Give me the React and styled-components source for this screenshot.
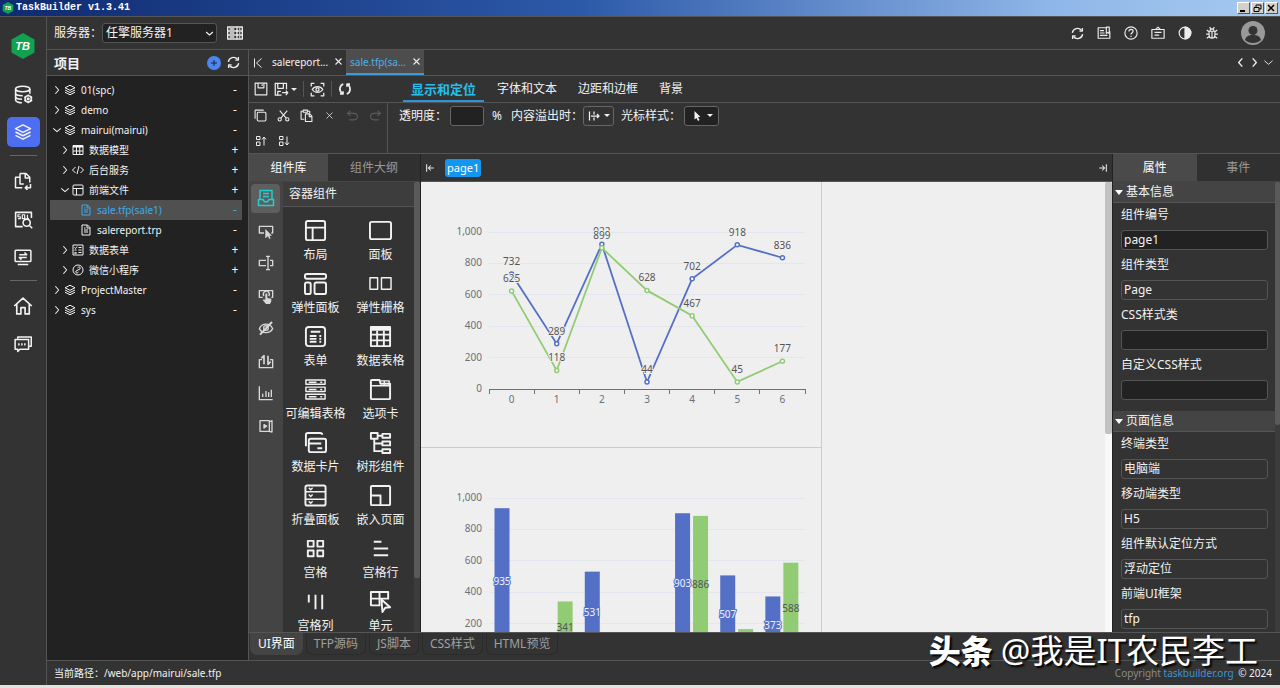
import React, { useState } from 'react';
import styled, { createGlobalStyle } from 'styled-components';

const GlobalStyle = createGlobalStyle`
    * { box-sizing: border-box; }
    html, body, #root { height: 100%; }
    body {
        margin: 0;
        overflow: hidden;
        background-color: #333;
        color: #f2f2f2;
        font-family: 'Noto Sans', 'Noto Sans CJK SC', sans-serif;
        font-size: 12px;
        line-height: 16px;
    }
    button, input, select { font: inherit; color: inherit; margin: 0; }
    button { background: none; border: 0; padding: 0; cursor: pointer; }
    a { text-decoration: none; }
`;

/* ---------- icons, all on a 24 grid ---------- */

const cursor = <path d="M11 9l10 10-4 0 2 4-2 1-2-4-4 3z" fill="currentColor" stroke="none" />;

const ICONS = {
    layers: <><path d="M12 2.500L22 7.500 12 12.500 2 7.500z" /><path d="M2 12l10 5 10-5" /><path d="M2 16.500l10 5 10-5" /></>,
    table: <><path d="M2 3h20v18H2z" /><path d="M2 5h20" strokeWidth="4" /><path d="M2 14h20M9 5v16M15.500 5v16" /></>,
    code: <path d="M7 6l-6 6 6 6M17 6l6 6-6 6M14 4l-4 16" />,
    layout: <><rect x="2" y="2" width="20" height="20" rx="2" /><path d="M2 9h20M9 9v13" /></>,
    file: <><path d="M4 2h11l5 5v15H4z" /><path d="M14 2v6h6M8 12h8M8 16h8M8 8h3" /></>,
    form: <><rect x="2" y="2" width="20" height="20" /><path d="M5 7l2 2 3-4M5 16l4 4M9 16l-4 4M13 7h6M13 12h6M13 17h6M5 12h4" /></>,
    mini: <><circle cx="12" cy="12" r="10" /><path d="M11 8c3-4 7-1 5 2-1 1-3 1-4 2s-3 1-4 2c-2 3 2 6 5 2" /></>,
    right: <path d="M8 3l8 9-8 9" />,
    down: <path d="M3 8l9 8 9-8" />,
    left: <path d="M16 3l-8 9 8 9" />,
    first: <path d="M5 3v18M19 3l-10 9 10 9" />,
    sync: <><path d="M2.500 11a9.500 9.500 0 0 1 17-4.500M21.500 13a9.500 9.500 0 0 1-17 4.500" /><path d="M21 2v5.500h-5.500M3 22v-5.500h5.500" /></>,
    ring: <><path d="M9 3.500a9 9 0 0 0-1.500 16M15 20.500a9 9 0 0 0 1.500-16" /><path d="M3.500 20.500h5v-4.500M20.500 3.500h-5v4.500" /></>,
    server: <><path d="M1 3h22v18H1zM1 9h22M1 15h22M15 3v18" /><path d="M4 6h7M4 12h7M4 18h7M18 6h2M18 12h2M18 18h2" /></>,
    dbgear: <><ellipse cx="11" cy="5" rx="9" ry="3.500" /><path d="M2 5v14c0 2 4 3.500 8 3.500M20 5v6M2 10c0 2 4 3.500 9 3.500M2 14.500c0 2 3 3.500 8 3.500" /><circle cx="18" cy="17.500" r="4" /><circle cx="18" cy="17.500" r="1" /><path d="M18 12v2M18 21v2M13 15l2 1M21 19l2 1M23 15l-2 1M15 19l-2 1" /></>,
    docs: <><path d="M8 7H2v14h9" /><path d="M8 2h8l5 5v7M8 2v14h5M15 2v6h6" /><path d="M22 16v5h-7M18 18l-3 3 3 3" /></>,
    sql: <><path d="M22 10V3H2v18h9" /><path d="M8 6H5v2.500h3V11H5M10.500 6h3v5h-3zM13 10l2 2M17 6v5h2" strokeWidth="1.500" /><circle cx="16" cy="16" r="4.500" /><path d="M19.500 19.500L23 23" /></>,
    screen: <><rect x="1.500" y="3" width="21" height="15" rx="1" /><path d="M5 22h14M7 9h10l-3-3M17 12.500H7l3 3" /></>,
    home: <path d="M1.500 12L12 2.500 22.500 12M4.500 10v11.500h5V14h5v7.500h5V10" />,
    chat: <><path d="M5 5V2.500h18V15h-3" /><path d="M1.500 6h18v13H8l-3 3v-3H1.500z" /><path d="M5.500 12.500h2M9.500 12.500h2M13.500 12.500h2" strokeWidth="3" /></>,
    note: <><path d="M17 3H2v18h20V9" /><path d="M5 8h7M5 12h8M5 16h13M16 2v11l2.500-2 2.500 2V2z" /></>,
    help: <><circle cx="12" cy="12" r="10.500" /><path d="M8.500 9.500c0-5 7-4.500 7-.5 0 2.500-3.500 2.500-3.500 5.500M12 16.500v2.500" /></>,
    board: <><rect x="1.500" y="6" width="21" height="15" /><path d="M8 6l4-4 4 4M6 11h12M6 15.500h8" /></>,
    contrast: <><circle cx="12" cy="12" r="10" /><path d="M12 2a10 10 0 0 1 0 20z" fill="currentColor" /></>,
    bug: <><path d="M7 9h10v7a5 5 0 0 1-10 0zM8.500 9a3.500 4 0 0 1 7 0M12 9v12M7 10L3 7M17 10l4-3M7 14H2M17 14h5M7 18l-4 3M17 18l4 3M8 2l2 3M16 2l-2 3" /></>,
    save: <><path d="M2 2h20v20H2z" /><path d="M7 2v8h10V2M14 4v3" /></>,
    saveas: <><path d="M12 21H2V2h18v10" /><path d="M6 2v8h9V2M13 17h9l-3-3M22 17l-3 4M6 21v-6h5" /></>,
    preview: <><path d="M2 7V2h5M17 2h5v5M22 17v5h-5M7 22H2v-5" /><path d="M3.500 12c4-6 13-6 17 0-4 6-13 6-17 0z" /><circle cx="12" cy="12" r="2.500" /></>,
    copy: <><rect x="6" y="6" width="16" height="16" rx="2" /><path d="M2 18V3q0-1 1-1h15" /></>,
    cut: <><circle cx="5" cy="19" r="3" /><circle cx="19" cy="19" r="3" /><path d="M7 17L19 3M17 17L5 3" /></>,
    paste: <><path d="M8 19H2V4h4M14 4h4v4M6 2h8v4H6z" /><path d="M10 9h8l4 4v10H10zM17 9v5h5" /></>,
    close: <path d="M4 4l16 16M20 4L4 20" />,
    undo: <path d="M8 3L3 8l5 5M3 8h12a6 6 0 0 1 0 12H6" />,
    redo: <path d="M16 3l5 5-5 5M21 8H9a6 6 0 0 0 0 12h9" />,
    moveup: <path d="M3 3h7v6H3zM3 14h7v7H3zM18 21V4M14 9l4-5 4 5" />,
    movedown: <path d="M3 3h7v6H3zM3 14h7v7H3zM18 3v17M14 15l4 5 4-5" />,
    collapse: <path d="M4 3v18M21 12H8M14 6l-6 6 6 6" />,
    expand: <path d="M20 3v18M3 12h13M10 6l6 6-6 6" />,
    overflow: <path d="M3 3v18M12 3v6M12 15v6M6 12h16M18 8l4 4-4 4" />,
    pointer: <path d="M7 2l12 12-5 0 3 6-3 2-3-6-4 3z" fill="currentColor" stroke="none" />,
    plus: <path d="M12 3v18M3 12h18" />,
    // component groups
    box: <><path d="M4 14V2h16v12" /><path d="M8 6h8M8 10h8M2 14h6l2 3h4l2-3h6v8H2z" /></>,
    click: <><path d="M9 15H2V5h20v10h-2" />{cursor}</>,
    textbox: <><path d="M12 8H2v8h10M18 8h4v8h-4" /><path d="M12 2h6M15 2v20M12 22h6" /></>,
    tap: <><path d="M7 14H2V4h20v10h-2" /><path d="M9 12a4.500 4.500 0 1 1 7 0" /><path d="M11 9q1.500-2 3 0v6l6 1v4l-2 4h-6l-5-6 2-1 2 1z" fill="currentColor" stroke="none" /></>,
    hidden: <><path d="M2 13c4-9 16-9 20 0-4 8-16 8-20 0z" /><circle cx="12" cy="12" r="3.500" /><path d="M3 22L21 3" strokeWidth="3" /></>,
    transfer: <><path d="M6 10H2v12h20V10h-4" /><path d="M9 17V4L5 8M15 4v13l4-4" strokeWidth="2.500" /></>,
    chart: <><path d="M2 2v20h20" /><path d="M7 18v-5M12 18V9M16 18v-7M20 18V7" /></>,
    media: <><path d="M3 4h14v16H3zM17 6l4-2v17l-4-1" /><path d="M9 10l4 2-4 3z" fill="currentColor" /></>,
    // components
    panel: <rect x="1" y="3" width="22" height="18" rx="2" />,
    flex: <><rect x="1" y="2" width="22" height="5" rx="2" /><rect x="1" y="11" width="6" height="12" rx="2" /><rect x="11" y="11" width="12" height="12" rx="2" /></>,
    flexgrid: <path d="M1 6h8v12H1zM13 6h10v12H13z" strokeWidth="1.500" />,
    formbox: <><rect x="2" y="2" width="20" height="20" rx="3" /><path d="M7 7h10M6 11.500h7M6 14.500h7M6 17.500h7M16 11.500h2M16 14.500h2M16 17.500h2" /></>,
    grid: <><path d="M2 2h20v20H2zM2 10h20M2 16h20M8.500 6v16M15.500 6v16" /><path d="M2 4h20" strokeWidth="4" /></>,
    editrows: <><path d="M2 2h20v4.500H2zM2 9.500h20V14H2zM2 17h20v5H2z" strokeWidth="1.500" /><path d="M5 4.500h8M17 4.500h2M5 12h8M17 12h2M5 19.500h8M17 19.500h2" strokeWidth="1.500" /></>,
    tabs: <><path d="M2 22V3q0-1 1-1h8l1 4h10v15q0 1-1 1H3q-1 0-1-1" /><path d="M2 8h20M12 3h9v4M16 3v4" strokeWidth="1.500" /></>,
    cards: <><path d="M2 16V4q0-2 2-2h13q2 0 2 2" /><rect x="5" y="8" width="18" height="14" rx="2" /><path d="M5 13h13M14 18h5" /></>,
    tree: <><path d="M2 2h7v6H2zM14 3h8v4h-8zM14 11h8v4h-8zM14 19h8v4h-8z" /><path d="M5.500 8v13H14M5.500 13H14M9 5h5" /></>,
    accordion: <><rect x="1.500" y="1.500" width="21" height="21" rx="2" /><path d="M1.500 8h21M1.500 16h21M5 4l2 2 2-2M5 11l2 2 2-2M5 18l2 2 2-2" strokeWidth="1.500" /></>,
    embed: <><rect x="2" y="2" width="20" height="20" rx="1" /><path d="M2 12h10v10" /></>,
    cells: <path d="M4 4h6v6H4zM14 4h6v6h-6zM4 14h6v6H4zM14 14h6v6h-6z" />,
    rows: <path d="M5 5h8M5 12h15M5 19h15" />,
    cols: <path d="M5 5v8M12 5v15M19 5v15" />,
    cell: <><path d="M12 16H2V2h18v8M2 9h18M11 2v14" /><path d="M13 10l9 8-5 .5-3 4.500z" /></>,
};

const Svg = styled.svg`
    display: block;
    flex: none;
    fill: none;
    stroke: currentColor;
    stroke-linejoin: round;
`;

const Icon = ({ name, size = 14, stroke = 2 }) => (
    <Svg width={size} height={size} viewBox="0 0 24 24" strokeWidth={stroke} aria-hidden="true">{ICONS[name]}</Svg>
);

const Caret = styled.span`
    border: 3px solid transparent;
    border-top-color: currentColor;
    border-bottom: 0;
`;

/* ---------- window frame ---------- */

const Window = styled.div`
    display: flex;
    flex-direction: column;
    height: 100%;
    position: relative;
    border-bottom: 3px solid #e4e2dc;
`;

const TitleBar = styled.header`
    display: flex;
    align-items: center;
    gap: 2px;
    height: 16px;
    padding: 0 2px;
    background: linear-gradient(90deg, #0f2a70, #2c59a8 45%, #8fb6e8 82%, #a6caf0);
    font: bold 10px/16px 'Liberation Mono', monospace;
    color: white;
`;

const WindowTitle = styled.span`
    flex: 1;
`;

const WindowButtons = styled.div`
    display: flex;
    gap: 1px;
`;

const WindowButton = styled.button`
    display: grid;
    place-items: center;
    width: 13px;
    height: 12px;
    background-color: #d4d0c8;
    border: 1px solid;
    border-color: #fff #555 #555 #fff;
    color: black;
`;

const Main = styled.div`
    display: flex;
    flex: 1;
    min-height: 0;
    border-top: 1px solid #555;
`;

const Rail = styled.nav`
    display: flex;
    flex-direction: column;
    align-items: center;
    gap: 8px;
    width: 47px;
    padding-top: 16px;
    border-right: 1px solid #555;
`;

const Logo = styled.a`
    display: block;
    height: 26px;
    margin-bottom: 12px;
`;

const RailButton = styled.button`
    display: grid;
    place-items: center;
    width: 33px;
    height: 30px;
    border-radius: 5px;
    background-color: ${({ $active }) => ($active ? '#4e6ef2' : 'transparent')};
`;

const RailLine = styled.hr`
    width: 27px;
    margin: 0 0 2px;
    border: 0;
    border-top: 1px solid #666;
`;

const Workspace = styled.div`
    display: flex;
    flex-direction: column;
    flex: 1;
    min-width: 0;
`;

const TopBar = styled.div`
    display: flex;
    align-items: center;
    height: 33px;
    padding: 0 15px 0 7px;
    border-bottom: 1px solid #555;
`;

const ServerBox = styled.div`
    position: relative;
    display: flex;
    align-items: center;
    margin-right: 10px;
    svg { position: absolute; right: 3px; pointer-events: none; }
`;

const ServerSelect = styled.select`
    appearance: none;
    width: 115px;
    height: 20px;
    padding: 0 3px;
    border: 1px solid #555;
    border-radius: 3px;
    background-color: #222;
    line-height: 18px;
`;

const TopActions = styled.div`
    display: flex;
    align-items: center;
    gap: 13px;
    margin-left: auto;
`;

const IconButton = styled.button`
    display: flex;
    align-items: center;
    justify-content: center;
    gap: 2px;
    color: ${({ $dim }) => ($dim ? '#5c5c5c' : '#ececec')};
`;

const Avatar = styled(IconButton)`
    margin-left: 9px;
`;

const Panes = styled.div`
    display: flex;
    flex: 1;
    min-height: 0;
`;

const StatusBar = styled.footer`
    display: flex;
    align-items: center;
    justify-content: space-between;
    height: 25px;
    padding: 0 8px 0 7px;
    border-top: 1px solid #555;
    font-size: 10px;
    a { margin-right: 2px; color: #3d94d6; }
`;

const Faint = styled.span`
    color: #8a8a8a;
`;

const Watermark = styled.div`
    position: absolute;
    right: 22px;
    bottom: 14px;
    font-size: 33px;
    line-height: 40px;
    color: white;
    text-shadow: 2px 2px 2px #000;
    pointer-events: none;
    b { margin-right: 8px; font-size: 32px; font-weight: 900; }
`;

/* ---------- project tree ---------- */

const ProjectPane = styled.aside`
    display: flex;
    flex-direction: column;
    width: 201px;
    background-color: #222;
`;

const ProjectHead = styled.div`
    display: flex;
    align-items: center;
    gap: 6px;
    height: 26px;
    padding: 0 8px 0 7px;
    border-bottom: 1px solid #555;
    background-color: #333;
    h2 { flex: 1; margin: 0; font-size: 13px; }
`;

const AddButton = styled.button`
    display: grid;
    place-items: center;
    width: 14px;
    height: 14px;
    border-radius: 50%;
    background-color: #4e86f0;
    color: #16264a;
`;

const Tree = styled.ul`
    list-style: none;
    margin: 0;
    padding: 4px 6px 0 3px;
    font-size: 10px;
`;

const TreeRow = styled.li`
    display: flex;
    align-items: center;
    height: 20px;
    padding: 0 3px 0 ${({ $depth }) => $depth * 8}px;
    background-color: ${({ $active }) => ($active ? '#505050' : 'transparent')};
    color: ${({ $active }) => ($active ? '#3fa9e8' : '#f2f2f2')};
`;

const TreeToggle = styled.button`
    display: grid;
    place-items: center;
    width: 14px;
    height: 20px;
`;

const TreeName = styled.span`
    flex: 1;
    padding-left: 5px;
    white-space: nowrap;
`;

const TreeAction = styled.button`
    width: 8px;
    font-size: 12px;
    text-align: center;
`;

/* ---------- editor ---------- */

const Editor = styled.main`
    display: flex;
    flex-direction: column;
    flex: 1;
    min-width: 0;
    border-left: 1px solid #555;
`;

const FileTabs = styled.div`
    display: flex;
    align-items: center;
    height: 26px;
    padding: 0 6px 0 3px;
    border-bottom: 1px solid #555;
    font-size: 10px;
`;

const FileTab = styled.div`
    display: flex;
    align-items: center;
    justify-content: space-between;
    width: 78px;
    height: 25px;
    padding: 0 3px 0 4px;
    border-bottom: 2px solid ${({ $active }) => ($active ? '#3c9ad8' : 'transparent')};
    background-color: ${({ $active }) => ($active ? '#4d4d4d' : 'transparent')};
    span { color: ${({ $active }) => ($active ? '#4fb0e8' : '#f2f2f2')}; }
    &:nth-child(2) { margin-left: 4px; }
`;

const TabArrows = styled.div`
    display: flex;
    gap: 3px;
    margin-left: auto;
`;

const ToolRow = styled.div`
    display: flex;
    min-height: 27px;
    border-bottom: 1px solid #555;
`;

const FileTools = styled.div`
    display: flex;
    align-items: center;
    gap: 6px;
    width: 149px;
    padding-left: 5px;
`;

const ToolLine = styled.span`
    width: 1px;
    height: 16px;
    background-color: #555;
`;

const StyleTabs = styled.div`
    display: flex;
    align-items: stretch;
    gap: 5px;
    padding-left: 5px;
`;

const StyleTab = styled.button`
    padding: 2px 8px 0;
    border-bottom: 2px solid ${({ $active }) => ($active ? '#2b93d8' : 'transparent')};
    color: ${({ $active }) => ($active ? '#22c0ea' : '#f2f2f2')};
    font-size: ${({ $active }) => ($active ? 13 : 12)}px;
    font-weight: ${({ $active }) => ($active ? 'bold' : 'normal')};
`;

const EditTools = styled.div`
    display: grid;
    grid-template-columns: repeat(6, 23px);
    grid-auto-rows: 25px;
    width: 139px;
    border-right: 1px solid #555;
`;

const StyleFields = styled.div`
    display: flex;
    align-items: center;
    height: 25px;
    padding-left: 11px;
`;

const OpacityInput = styled.input`
    width: 34px;
    height: 20px;
    margin: 0 8px 0 3px;
    border: 1px solid #666;
    border-radius: 3px;
    background-color: #222;
`;

const Unit = styled.span`
    width: 19px;
`;

const DropButton = styled.button`
    display: flex;
    align-items: center;
    justify-content: center;
    gap: 4px;
    width: ${({ $wide }) => ($wide ? 35 : 31)}px;
    height: 20px;
    margin: 0 ${({ $wide }) => ($wide ? 0 : 7)}px 0 ${({ $wide }) => ($wide ? 3 : 0)}px;
    border: 1px solid #666;
    border-radius: 3px;
    background-color: ${({ $wide }) => ($wide ? '#222' : '#333')};
`;

const EditorBody = styled.div`
    display: flex;
    flex: 1;
    min-height: 0;
`;

const Pane = styled.section`
    display: flex;
    flex-direction: column;
    width: ${({ $width }) => $width}px;
    min-height: 0;
    &:first-child { border-right: 1px solid #222; }
`;

const PaneTabs = styled.div`
    display: flex;
    height: 28px;
    border-bottom: 1px solid #444;
`;

const PaneTab = styled.button`
    flex: ${({ $grow }) => $grow || 1};
    background-color: ${({ $active }) => ($active ? '#4a4a4a' : '#303030')};
    color: ${({ $active }) => ($active ? '#fff' : '#999')};
`;

const PaneBody = styled.div`
    display: flex;
    flex: 1;
    min-height: 0;
    overflow: hidden;
`;

const GroupColumn = styled.div`
    background-color: #444;
`;

const Groups = styled.div`
    display: grid;
    grid-auto-rows: 1fr;
    width: 34px;
    height: 260px;
    padding: 0 3px 0 2px;
`;

const GroupButton = styled.button`
    display: grid;
    place-items: center;
    margin: 2px 0;
    border-radius: 4px;
    background-color: ${({ $active }) => ($active ? '#5e5e5e' : 'transparent')};
    color: ${({ $active }) => ($active ? '#1fd0d0' : '#d8d8d8')};
`;

const Library = styled.div`
    flex: 1;
    overflow: hidden;
    h3 {
        height: 25px;
        margin: 0;
        padding-left: 6px;
        border-bottom: 1px solid #555;
        background-color: #3d3d3d;
        font-size: 12px;
        line-height: 24px;
        font-weight: normal;
    }
`;

const Parts = styled.div`
    display: grid;
    grid-template-columns: 1fr 1fr;
    grid-auto-rows: 53px;
    padding: 12px 1px 0 0;
`;

const Part = styled.button`
    display: flex;
    flex-direction: column;
    align-items: center;
    gap: 5px;
    white-space: nowrap;
`;

const ScrollTrack = styled.div`
    width: ${({ $width }) => $width}px;
    background-color: ${({ $light }) => ($light ? '#f8f8f8' : '#3c3c3c')};
`;

const ScrollThumb = styled.div`
    height: ${({ $size }) => $size}%;
    border-radius: 2px;
    background-color: ${({ $light }) => ($light ? '#c1c1c1' : '#5a5a5a')};
`;

const Stage = styled.section`
    display: flex;
    flex-direction: column;
    flex: 1;
    min-width: 0;
    border-right: 1px solid #222;
`;

const StageHead = styled.div`
    display: flex;
    align-items: center;
    justify-content: space-between;
    height: 28px;
    padding: 0 4px;
    border-bottom: 1px solid #555;
`;

const Crumbs = styled.div`
    display: flex;
    align-items: center;
    gap: 10px;
`;

const Crumb = styled.a`
    padding: 1px 2px;
    border-radius: 3px;
    background-color: #1296f0;
    color: white;
    font-size: 11px;
`;

const Page = styled.div`
    flex: 1;
    overflow: hidden;
    background-color: #efefef;
`;

const ChartBox = styled.div`
    width: 401px;
    border: solid #ccc;
    border-width: 0 1px 1px 0;
`;

const ChartSvg = styled.svg`
    display: block;
    font-size: 10px;
    text { text-anchor: middle; fill: #555; }
    text.axis { fill: #6e7079; }
    text.value { text-anchor: end; }
    text.halo { paint-order: stroke; stroke: #efefef; stroke-width: 2px; }
    text.onblue { paint-order: stroke; stroke: #5470c6; stroke-width: 2px; fill: #eef2ff; }
`;

const Props = styled.div`
    flex: 1;
    overflow: hidden;
`;

const Section = styled.div`
    padding-bottom: 8px;
    h3 {
        display: flex;
        align-items: center;
        gap: 3px;
        height: 21px;
        margin: 0;
        padding-left: 2px;
        border-bottom: 1px solid #555;
        background-color: #444;
        font-size: 12px;
        font-weight: normal;
    }
`;

const Triangle = styled.span`
    border: 4px solid transparent;
    border-top: 5px solid white;
    border-bottom: 0;
`;

const Field = styled.label`
    display: block;
    padding: 0 7px 3px 8px;
    line-height: 24px;
`;

const FieldInput = styled.input`
    display: block;
    width: 100%;
    height: 20px;
    margin-top: 3px;
    padding: 0 2px;
    border: 1px solid #555;
    border-radius: 3px;
    background-color: ${({ readOnly }) => (readOnly ? '#333' : '#222')};
`;

const ViewTabs = styled.div`
    display: flex;
    gap: 3px;
    height: 28px;
    padding-left: 1px;
    border-top: 1px solid #555;
`;

const ViewTab = styled.button`
    height: 22px;
    padding: 0 7px;
    border: 1px solid ${({ $active }) => ($active ? '#444' : '#2b2b2b')};
    border-top: 0;
    border-radius: 0 0 7px 7px;
    background-color: ${({ $active }) => ($active ? '#444' : '#333')};
    color: ${({ $active }) => ($active ? '#fff' : '#a0a0a0')};
`;

/* ---------- data ---------- */

const TREE = [
    { name: '01(spc)', icon: 'layers', depth: 0, toggle: 'right', action: '-' },
    { name: 'demo', icon: 'layers', depth: 0, toggle: 'right', action: '-' },
    { name: 'mairui(mairui)', icon: 'layers', depth: 0, toggle: 'down', action: '-' },
    { name: '数据模型', icon: 'table', depth: 1, toggle: 'right', action: '+' },
    { name: '后台服务', icon: 'code', depth: 1, toggle: 'right', action: '+' },
    { name: '前端文件', icon: 'layout', depth: 1, toggle: 'down', action: '+' },
    { name: 'sale.tfp(sale1)', icon: 'file', depth: 2, action: '-', active: true },
    { name: 'salereport.trp', icon: 'file', depth: 2, action: '-' },
    { name: '数据表单', icon: 'form', depth: 1, toggle: 'right', action: '+' },
    { name: '微信小程序', icon: 'mini', depth: 1, toggle: 'right', action: '+' },
    { name: 'ProjectMaster', icon: 'layers', depth: 0, toggle: 'right', action: '-' },
    { name: 'sys', icon: 'layers', depth: 0, toggle: 'right', action: '-' },
];

const GROUPS = ['box', 'click', 'textbox', 'tap', 'hidden', 'transfer', 'chart', 'media'];

const PARTS = [
    ['布局', 'layout'], ['面板', 'panel'],
    ['弹性面板', 'flex'], ['弹性栅格', 'flexgrid'],
    ['表单', 'formbox'], ['数据表格', 'grid'],
    ['可编辑表格', 'editrows'], ['选项卡', 'tabs'],
    ['数据卡片', 'cards'], ['树形组件', 'tree'],
    ['折叠面板', 'accordion'], ['嵌入页面', 'embed'],
    ['宫格', 'cells'], ['宫格行', 'rows'],
    ['宫格列', 'cols'], ['单元', 'cell'],
];

const SECTIONS = [
    { title: '基本信息', fields: [['组件编号', 'page1'], ['组件类型', 'Page', true], ['CSS样式类', ''], ['自定义CSS样式', '']] },
    { title: '页面信息', fields: [['终端类型', '电脑端', true], ['移动端类型', 'H5', true], ['组件默认定位方式', '浮动定位', true], ['前端UI框架', 'tfp', true]] },
];

const LINES = [
    { color: '#5470c6', values: [732, 289, 922, 44, 702, 918, 836] },
    { color: '#91cc75', values: [625, 118, 899, 628, 467, 45, 177] },
];

const BARS = [
    { color: '#5470c6', label: 'onblue', values: [935, 0, 531, 0, 903, 507, 373] },
    { color: '#91cc75', label: '', values: [0, 341, 0, 0, 886, 165, 588] },
];

/* ---------- charts ---------- */

const STEP = 316 / 7;
const LEFT = 68;
const yOf = value => 207 - value * 0.157;

const Axes = () => (
    <>
        {[0, 200, 400, 600, 800, 1000].map(tick => (
            <g key={tick}>
                {tick > 0 && <path d={`M68 ${Math.floor(yOf(tick)) + 0.5}H384`} stroke="#e3e6ec" />}
                <text className="axis value" x="61" y={yOf(tick) + 3}>{tick.toLocaleString('en-US')}</text>
            </g>
        ))}
        <path d="M68 207.500H384" stroke="#6e7079" />
        {[0, 1, 2, 3, 4, 5, 6, 7].map(i => (
            <path key={i} d={`M${Math.floor(LEFT + i * STEP) + 0.5} 207v5`} stroke="#6e7079" />
        ))}
        {[0, 1, 2, 3, 4, 5, 6].map(i => (
            <text key={i} className="axis" x={LEFT + (i + 0.5) * STEP} y="221">{i}</text>
        ))}
    </>
);

const LineChart = () => (
    <ChartSvg width="400" height="265" role="img" aria-label="line chart">
        <Axes />
        {LINES.map(({ color, values }) => {
            const points = values.map((v, i) => [LEFT + (i + 0.5) * STEP, yOf(v)]);
            return (
                <g key={color}>
                    <polyline points={points.join(' ')} fill="none" stroke={color} strokeWidth="1.800" />
                    {points.map(([x, y]) => <circle key={x} cx={x} cy={y} r="2" fill="#fff" stroke={color} strokeWidth="1.500" />)}
                    {points.map(([x, y], i) => <text key={x} className="halo" x={x} y={y - 9}>{values[i]}</text>)}
                </g>
            );
        })}
    </ChartSvg>
);

const BarChart = () => (
    <ChartSvg width="400" height="265" role="img" aria-label="bar chart">
        <Axes />
        {BARS.map(({ color, label, values }, series) => values.map((v, i) => {
            const x = LEFT + i * STEP + 5.5 + series * 18;
            return v > 0 && (
                <g key={color + i}>
                    <rect x={x} y={yOf(v)} width="15" height={v * 0.157} fill={color} />
                    <text className={label} x={x + 7.5} y={yOf(v / 2) + 3}>{v}</text>
                </g>
            );
        }))}
    </ChartSvg>
);

const LogoMark = ({ size }) => (
    <svg width={size} height={size} viewBox="0 0 26 26" role="img" aria-label="TB">
        <path d="M13 0l11.500 6.500v13L13 26 1.500 19.500v-13z" fill="#12a150" />
        <text x="12.500" y="17" fill="#fff" fontSize="11" fontWeight="bold" fontStyle="italic" fontFamily="Liberation Sans, sans-serif" textAnchor="middle">TB</text>
    </svg>
);

const App = () => {
    const [view, setView] = useState('UI界面');
    const [styleTab, setStyleTab] = useState('显示和定位');
    const [group, setGroup] = useState('box');

    return (
        <Window>
            <GlobalStyle />
            <TitleBar>
                <LogoMark size={12} />
                <WindowTitle>TaskBuilder v1.3.41</WindowTitle>
                <WindowButtons>
                    <WindowButton aria-label="Minimize"><svg width="9" height="8"><path d="M1 7h5" stroke="#000" strokeWidth="2" /></svg></WindowButton>
                    <WindowButton aria-label="Restore"><svg width="9" height="8" fill="none" stroke="#000"><path d="M3 3V1h5v4H6M1 3.500h5v4H1z" /></svg></WindowButton>
                    <WindowButton aria-label="Close"><svg width="9" height="8"><path d="M1 1l6 6M7 1L1 7" stroke="#000" strokeWidth="1.500" /></svg></WindowButton>
                </WindowButtons>
            </TitleBar>

            <Main>
                <Rail>
                    <Logo href="#"><LogoMark size={26} /></Logo>
                    <RailButton aria-label="Database"><Icon name="dbgear" size={19} /></RailButton>
                    <RailButton $active aria-label="Projects"><Icon name="layers" size={18} /></RailButton>
                    <RailLine />
                    <RailButton aria-label="Files"><Icon name="docs" size={18} /></RailButton>
                    <RailButton aria-label="SQL"><Icon name="sql" size={19} /></RailButton>
                    <RailButton aria-label="Remote"><Icon name="screen" size={18} /></RailButton>
                    <RailLine />
                    <RailButton aria-label="Home"><Icon name="home" size={20} /></RailButton>
                    <RailButton aria-label="Messages"><Icon name="chat" size={18} /></RailButton>
                </Rail>

                <Workspace>
                    <TopBar>
                        <label htmlFor="server">服务器：</label>
                        <ServerBox>
                            <ServerSelect id="server"><option>任擎服务器1</option></ServerSelect>
                            <Icon name="down" size={9} stroke={3} />
                        </ServerBox>
                        <IconButton aria-label="Servers"><Icon name="server" size={16} /></IconButton>
                        <TopActions>
                            <IconButton aria-label="Refresh"><Icon name="sync" size={13} stroke={2.5} /></IconButton>
                            {['note', 'help', 'board', 'contrast', 'bug'].map(name => (
                                <IconButton key={name} aria-label={name}><Icon name={name} size={14} /></IconButton>
                            ))}
                            <Avatar aria-label="Account">
                                <svg width="24" height="24" viewBox="0 0 24 24">
                                    <circle cx="12" cy="12" r="12" fill="#999" />
                                    <circle cx="12" cy="9.500" r="4.500" fill="#333" />
                                    <path d="M4 19c1-4 4-5 8-5s7 1 8 5c-4 4-12 4-16 0z" fill="#333" />
                                </svg>
                            </Avatar>
                        </TopActions>
                    </TopBar>

                    <Panes>
                        <ProjectPane>
                            <ProjectHead>
                                <h2>项目</h2>
                                <AddButton aria-label="Add project"><Icon name="plus" size={8} stroke={3} /></AddButton>
                                <IconButton aria-label="Reload projects"><Icon name="sync" size={13} stroke={2.5} /></IconButton>
                            </ProjectHead>
                            <Tree>
                                {TREE.map(item => (
                                    <TreeRow key={item.name} $depth={item.depth} $active={item.active}>
                                        <TreeToggle aria-label={item.name}>
                                            {item.toggle && <Icon name={item.toggle} size={10} stroke={2.5} />}
                                        </TreeToggle>
                                        <Icon name={item.icon} size={12} />
                                        <TreeName>{item.name}</TreeName>
                                        <TreeAction>{item.action}</TreeAction>
                                    </TreeRow>
                                ))}
                            </Tree>
                        </ProjectPane>

                        <Editor>
                            <FileTabs>
                                <IconButton aria-label="First tab"><Icon name="first" size={12} /></IconButton>
                                <FileTab>
                                    <span>salereport...</span>
                                    <IconButton aria-label="Close salereport"><Icon name="close" size={9} stroke={3} /></IconButton>
                                </FileTab>
                                <FileTab $active>
                                    <span>sale.tfp(sa...</span>
                                    <IconButton aria-label="Close sale.tfp"><Icon name="close" size={9} stroke={3} /></IconButton>
                                </FileTab>
                                <TabArrows>
                                    <IconButton aria-label="Previous"><Icon name="left" size={11} stroke={3} /></IconButton>
                                    <IconButton aria-label="Next"><Icon name="right" size={11} stroke={3} /></IconButton>
                                    <IconButton aria-label="All tabs"><Icon name="down" size={11} /></IconButton>
                                </TabArrows>
                            </FileTabs>

                            <ToolRow>
                                <FileTools>
                                    <IconButton aria-label="Save"><Icon name="save" size={14} /></IconButton>
                                    <IconButton aria-label="Save as"><Icon name="saveas" size={15} /><Caret /></IconButton>
                                    <ToolLine />
                                    <IconButton aria-label="Preview"><Icon name="preview" size={15} /></IconButton>
                                    <ToolLine />
                                    <IconButton aria-label="Reload"><Icon name="ring" size={14} stroke={3} /></IconButton>
                                </FileTools>
                                <StyleTabs>
                                    {['显示和定位', '字体和文本', '边距和边框', '背景'].map(name => (
                                        <StyleTab key={name} $active={name === styleTab} onClick={() => setStyleTab(name)}>{name}</StyleTab>
                                    ))}
                                </StyleTabs>
                            </ToolRow>

                            <ToolRow>
                                <EditTools>
                                    {['copy', 'cut', 'paste', 'close', 'undo', 'redo', 'moveup', 'movedown'].map(name => (
                                        <IconButton key={name} aria-label={name} $dim={name === 'undo' || name === 'redo'}>
                                            <Icon name={name} size={name === 'close' ? 9 : name.startsWith('move') ? 12 : 13} />
                                        </IconButton>
                                    ))}
                                </EditTools>
                                <StyleFields>
                                    <label htmlFor="opacity">透明度：</label>
                                    <OpacityInput id="opacity" />
                                    <Unit>%</Unit>
                                    <span>内容溢出时：</span>
                                    <DropButton aria-label="Overflow"><Icon name="overflow" size={12} stroke={2.5} /><Caret /></DropButton>
                                    <span>光标样式：</span>
                                    <DropButton $wide aria-label="Cursor"><Icon name="pointer" size={12} /><Caret /></DropButton>
                                </StyleFields>
                            </ToolRow>

                            <EditorBody>
                                <Pane $width={172}>
                                    <PaneTabs>
                                        <PaneTab $active $grow={79}>组件库</PaneTab>
                                        <PaneTab $grow={92}>组件大纲</PaneTab>
                                    </PaneTabs>
                                    <PaneBody>
                                        <GroupColumn>
                                            <Groups>
                                                {GROUPS.map(name => (
                                                    <GroupButton key={name} aria-label={name} $active={name === group} onClick={() => setGroup(name)}>
                                                        <Icon name={name} size={name === 'box' ? 18 : 16} />
                                                    </GroupButton>
                                                ))}
                                            </Groups>
                                        </GroupColumn>
                                        <Library>
                                            <h3>容器组件</h3>
                                            <Parts>
                                                {PARTS.map(([label, icon]) => (
                                                    <Part key={label}><Icon name={icon} size={23} />{label}</Part>
                                                ))}
                                            </Parts>
                                        </Library>
                                        <ScrollTrack $width={6}><ScrollThumb $size={88} /></ScrollTrack>
                                    </PaneBody>
                                </Pane>

                                <Stage>
                                    <StageHead>
                                        <Crumbs>
                                            <IconButton aria-label="Collapse left"><Icon name="collapse" size={10} stroke={2.5} /></IconButton>
                                            <Crumb href="#page1">page1</Crumb>
                                        </Crumbs>
                                        <IconButton aria-label="Collapse right"><Icon name="expand" size={10} stroke={2.5} /></IconButton>
                                    </StageHead>
                                    <PaneBody>
                                        <Page>
                                            <ChartBox><LineChart /></ChartBox>
                                            <ChartBox><BarChart /></ChartBox>
                                        </Page>
                                        <ScrollTrack $light $width={7}><ScrollThumb $light $size={56} /></ScrollTrack>
                                    </PaneBody>
                                </Stage>

                                <Pane $width={167}>
                                    <PaneTabs>
                                        <PaneTab $active>属性</PaneTab>
                                        <PaneTab>事件</PaneTab>
                                    </PaneTabs>
                                    <PaneBody>
                                        <Props>
                                            {SECTIONS.map(({ title, fields }) => (
                                                <Section key={title}>
                                                    <h3><Triangle />{title}</h3>
                                                    {fields.map(([label, value, fixed]) => (
                                                        <Field key={label}>
                                                            {label}
                                                            <FieldInput defaultValue={value} readOnly={fixed} />
                                                        </Field>
                                                    ))}
                                                </Section>
                                            ))}
                                        </Props>
                                        <ScrollTrack $width={5}><ScrollThumb $size={54} /></ScrollTrack>
                                    </PaneBody>
                                </Pane>
                            </EditorBody>

                            <ViewTabs>
                                {['UI界面', 'TFP源码', 'JS脚本', 'CSS样式', 'HTML预览'].map(name => (
                                    <ViewTab key={name} $active={name === view} onClick={() => setView(name)}>{name}</ViewTab>
                                ))}
                            </ViewTabs>
                        </Editor>
                    </Panes>

                    <StatusBar>
                        <span>当前路径：/web/app/mairui/sale.tfp</span>
                        <span><Faint>Copyright</Faint> <a href="#home">taskbuilder.org</a> © 2024</span>
                    </StatusBar>
                </Workspace>
            </Main>
            <Watermark><b>头条</b>@我是IT农民李工</Watermark>
        </Window>
    );
};

export default App;
